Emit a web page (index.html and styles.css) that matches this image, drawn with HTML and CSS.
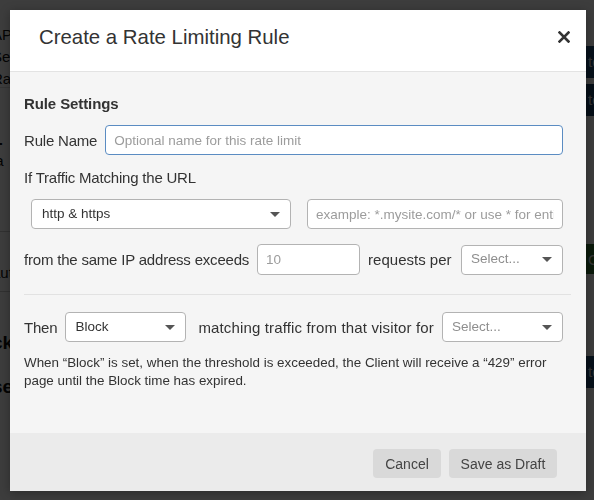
FILE: index.html
```html
<!DOCTYPE html>
<html>
<head>
<meta charset="utf-8">
<link rel="stylesheet" href="styles.css">
</head>
<body>
<div class="page">
  <div class="bg-left">
    <div class="bg-blk b1"><div>API</div><div>Sec</div><div>Rat</div></div>
    <div class="bg-blk b2"><div class="big">1</div><div>la</div></div>
    <div class="bg-blk b3"><div>aut</div></div>
    <div class="bg-blk b4"><div class="big">ck</div><div>k</div><div class="big">se</div></div>
  </div>
  <div class="bg-right">
    <div class="bar blue b5">te</div>
    <div class="bar blue b6">te</div>
    <div class="bar green b7">C</div>
    <div class="bar blue b8">te</div>
  </div>
</div>
<div class="overlay"></div>
<div class="modal">
  <div class="modal-header">
    <h2 class="modal-title">Create a Rate Limiting Rule</h2>
    <button class="close" aria-label="Close">
      <svg width="12" height="12" viewBox="0 0 12 12"><path d="M1.5 1.5 L10.5 10.5 M10.5 1.5 L1.5 10.5" stroke="#333" stroke-width="2.6" stroke-linecap="square"/></svg>
    </button>
  </div>
  <div class="modal-body">
    <h3 class="section-title">Rule Settings</h3>
    <div class="row row-name">
      <label class="lbl">Rule Name</label>
      <input class="field focus grow" type="text" placeholder="Optional name for this rate limit">
    </div>
    <div class="lbl line">If Traffic Matching the URL</div>
    <div class="row row-url">
      <div class="select half"><span class="val">http &amp; https</span><span class="caret"></span></div>
      <input class="field half" type="text" placeholder="example: *.mysite.com/* or use * for entire site">
    </div>
    <div class="row row-ip">
      <span class="lbl">from the same IP address exceeds</span>
      <input class="field num" type="text" placeholder="10">
      <span class="lbl wide-sm">requests per</span>
      <div class="select small push"><span class="val ph">Select...</span><span class="caret"></span></div>
    </div>
    <div class="divider"></div>
    <div class="row row-then">
      <span class="lbl">Then</span>
      <div class="select mid"><span class="val">Block</span><span class="caret"></span></div>
      <span class="lbl pad-l wide">matching traffic from that visitor for</span>
      <div class="select mid push"><span class="val ph">Select...</span><span class="caret"></span></div>
    </div>
    <p class="note">When “Block” is set, when the threshold is exceeded, the Client will receive a “429” error page until the Block time has expired.</p>
  </div>
  <div class="modal-footer">
    <button class="btn btn-cancel">Cancel</button>
    <button class="btn btn-draft">Save as Draft</button>
  </div>
</div>
</body>
</html>
```
FILE: styles.css
```css
* { box-sizing: border-box; }
html, body { margin: 0; padding: 0; }
body {
  width: 594px;
  height: 500px;
  overflow: hidden;
  font-family: "Liberation Sans", Arial, sans-serif;
  color: #333;
  background: #fff;
}
.page {
  height: 500px;
  display: flex;
  justify-content: space-between;
  background: #fff;
}
.bg-left {
  width: 40px;
  margin-left: -8px;
  font-size: 15px;
  color: #111;
}
.bg-blk { border-bottom: 1px solid #ccc; }
.bg-blk div { line-height: 22px; }
.bg-blk .big { font-weight: bold; font-size: 19px; }
.b1 { padding-top: 24px; height: 88px; border-bottom: 1px solid #ddd; }
.b2 { padding-top: 40px; height: 144px; background: #fff; }
.b3 { padding-top: 30px; height: 60px; }
.b4 { padding-top: 40px; height: 168px; border-bottom: none; }
.bg-right {
  width: 40px;
  margin-right: -12px;
  font-size: 15px;
}
.bar { color: #ddd; padding-left: 22px; height: 32px; line-height: 32px; }
.blue { background: #1f4a73; }
.green { background: #2f6e2f; }
.b5 { margin-top: 46px; }
.b6 { margin-top: 6px; background: #173c63; }
.b7 { margin-top: 128px; height: 30px; }
.b8 { margin-top: 82px; }

.overlay {
  position: fixed;
  inset: 0;
  background: rgba(0, 0, 0, 0.76);
}
.modal {
  position: absolute;
  top: 10px;
  left: 10px;
  width: 576px;
  height: 481px;
  background: #f5f5f5;
  display: flex;
  flex-direction: column;
  box-shadow: 0 2px 10px rgba(0,0,0,0.3);
}
.modal-header {
  height: 62px;
  flex: none;
  background: #fff;
  border-bottom: 1px solid #e3e3e3;
  display: flex;
  align-items: center;
  justify-content: space-between;
  padding: 0 16px 6px 29px;
}
.modal-title {
  margin: 0;
  font-size: 20.4px;
  font-weight: normal;
  color: #333;
}
.close {
  border: none;
  background: none;
  padding: 0;
  width: 12px;
  height: 12px;
  margin-top: -2px;
  display: flex;
}
.modal-body {
  flex: 1;
  padding: 20px 23px 0 14px;
}
.section-title {
  margin: 0;
  font-size: 15px;
  font-weight: bold;
  line-height: 24px;
  color: #333;
  letter-spacing: -0.1px;
}
.row {
  display: flex;
  align-items: center;
}
.lbl { font-size: 15px; color: #333; white-space: nowrap; letter-spacing: -0.2px; }
.lbl.wide { letter-spacing: 0.15px; }
.lbl.wide-sm { letter-spacing: 0; }
.line { line-height: 22px; margin-top: 12px; }
.row-name { margin-top: 9px; gap: 8px; }
.grow { flex: 1; }
.field {
  height: 30px;
  border: 1px solid #b3b3b3;
  border-radius: 4px;
  background: #fff;
  font-family: inherit;
  font-size: 13.5px;
  padding: 0 8px;
  color: #333;
  outline: none;
}
.field::placeholder { color: #9c9c9c; }
.field.focus { border-color: #5b8cc2; }
.row-url { margin-top: 10px; padding-left: 7px; gap: 16px; }
.half { flex: 1; min-width: 0; }
.select {
  height: 30px;
  border: 1px solid #b3b3b3;
  border-radius: 4px;
  background: #fff;
  display: flex;
  align-items: center;
  justify-content: space-between;
  padding: 0 10px 0 9px;
  font-size: 13.5px;
}
.select .val { color: #333; margin-top: -2px; }
.select .val.ph { color: #8e8e8e; }
.caret {
  width: 0; height: 0;
  border-left: 5px solid transparent;
  border-right: 5px solid transparent;
  border-top: 5px solid #555;
}
.row-url .select { padding-left: 10px; }
.row-ip { margin-top: 15px; gap: 8px; }
.num { width: 103px; height: 31px; }
.small { width: 102px; }
.divider {
  height: 1px;
  background: #e2e2e2;
  margin: 19px -8px 0 0;
}
.row-then { margin-top: 17px; gap: 8px; }
.mid { width: 121px; }
.pad-l { margin-left: 4px; }
.push { margin-left: auto; }
.note {
  margin: 12px 0 0;
  font-size: 13.4px;
  line-height: 18px;
  color: #333;
}
.modal-footer {
  height: 58px;
  flex: none;
  background: #ebebeb;
  display: flex;
  justify-content: flex-end;
  align-items: flex-start;
  gap: 8px;
  padding: 16px 29px 0 0;
}
.btn {
  height: 29px;
  border: none;
  border-radius: 4px;
  background: #d9d9d9;
  font-family: inherit;
  font-size: 14px;
  color: #444;
  padding: 0;
}
.btn-cancel { width: 68px; }
.btn-draft { width: 108px; }
```
